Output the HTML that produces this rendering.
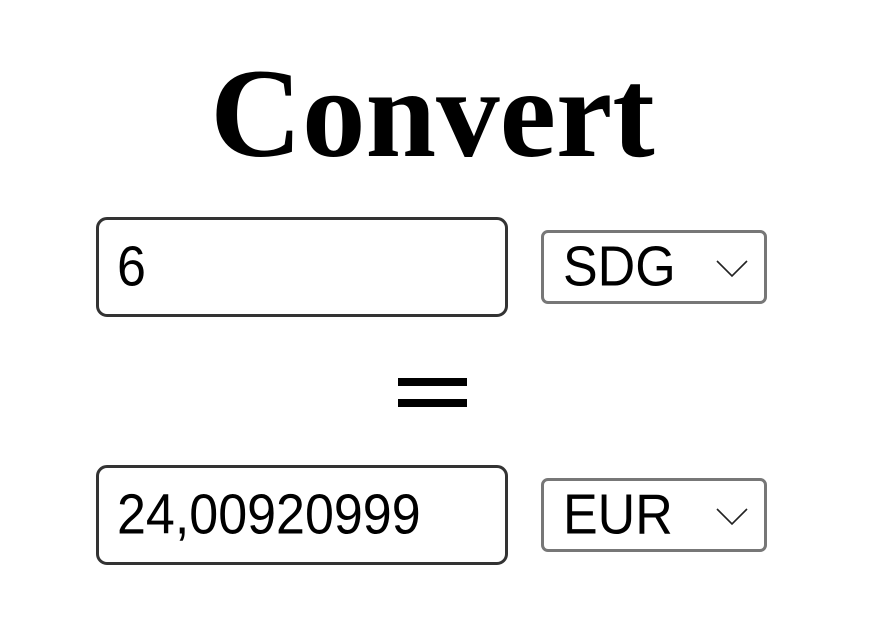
<!DOCTYPE html>
<html><head><style>
body{margin:0;width:892px;height:644px;background:#fff;position:relative;overflow:hidden;font-family:"Liberation Sans",Arial,sans-serif}
h1{position:absolute;left:0;width:865px;text-align:center;top:40px;margin:0;font:bold 127px/148px "Liberation Serif",serif;color:#000}
.in{position:absolute;left:96px;width:406px;height:94px;border:3px solid #333;border-radius:11px;box-sizing:content-box}
.in span{position:absolute;left:18px;top:0;line-height:94px;font-size:52px;color:#000;transform:scaleY(1.08);transform-origin:0 50%}
.sel{position:absolute;left:541px;width:220px;height:68px;border:3px solid #777;border-radius:7px}
.sel span{position:absolute;left:19px;top:0;line-height:68px;font-size:52px;color:#000;transform:scaleY(1.08);transform-origin:0 50%}
.sel svg{position:absolute;left:172px;top:26px}
.bar{position:absolute;left:398px;width:69px;height:8px;background:#000}
</style></head><body>
<h1>Convert</h1>
<div class="in" style="top:217px"><span>6</span></div>
<div class="sel" style="top:230px"><span>SDG</span><svg width="34" height="20"><path d="M1 2 L16 17 L31 2" fill="none" stroke="#222" stroke-width="1.6"/></svg></div>
<div class="bar" style="top:378px"></div>
<div class="bar" style="top:399px"></div>
<div class="in" style="top:465px"><span>24,00920999</span></div>
<div class="sel" style="top:478px"><span>EUR</span><svg width="34" height="20"><path d="M1 2 L16 17 L31 2" fill="none" stroke="#222" stroke-width="1.6"/></svg></div>
</body></html>
